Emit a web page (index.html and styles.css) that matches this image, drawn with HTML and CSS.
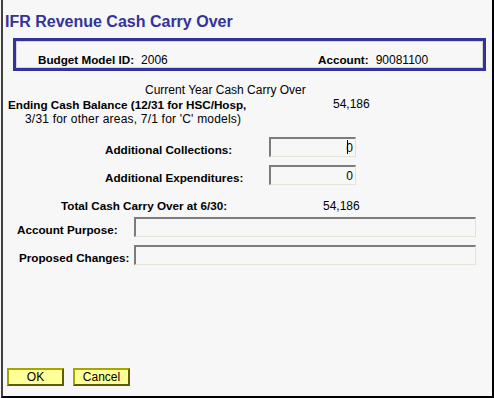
FILE: index.html
```html
<!DOCTYPE html>
<html lang="en">

<head>
    <meta charset="UTF-8">
    <title>IFR Revenue Cash Carry Over</title>
    <link rel="stylesheet" href="styles.css">
</head>

<body>
    <div class="window">
        <h1 class="title">IFR Revenue Cash Carry Over</h1>

        <!-- Model / account header -->
        <div class="model-box">
            <div class="pair pair-model"><span class="lbl">Budget Model ID:</span><span class="val">2006</span></div>
            <div class="pair"><span class="lbl">Account:</span><span class="val">90081100</span></div>
        </div>

        <div class="section-head">Current Year Cash Carry Over</div>

        <div class="row row-ending">
            <div class="lbl ending">Ending Cash Balance (12/31 for HSC/Hosp,<span class="sub">3/31 for other areas, 7/1 for 'C' models)</span></div>
            <div class="val">54,186</div>
        </div>

        <div class="row row-field row-collect">
            <label class="lbl adj" for="collections">Additional Collections:</label>
            <span class="caret-wrap"><input id="collections" class="amount" value="0"></span>
        </div>

        <div class="row row-field row-expend">
            <label class="lbl adj" for="expenditures">Additional Expenditures:</label>
            <input id="expenditures" class="amount" value="0">
        </div>

        <div class="row row-total">
            <div class="lbl total">Total Cash Carry Over at 6/30:</div>
            <div class="val">54,186</div>
        </div>

        <div class="row row-field row-purpose">
            <label class="lbl long" for="purpose">Account Purpose:</label>
            <input id="purpose" class="wide">
        </div>

        <div class="row row-field row-proposed">
            <label class="lbl long proposed" for="proposed">Proposed Changes:</label>
            <input id="proposed" class="wide">
        </div>

        <div class="actions">
            <button class="btn">OK</button>
            <button class="btn">Cancel</button>
        </div>
    </div>
</body>

</html>
```

FILE: styles.css
```css
body {
    margin: 0;
    background-color: #f7f7f7;
    color: #000;
    font-family: "Liberation Sans", Arial, sans-serif;
    font-size: 12px;
}

.window {
    margin-left: 1px;
    width: 493px;
    height: 398px;
    box-sizing: border-box;
    border-left: 2px solid #404040;
    border-right: 2px solid #000;
    border-bottom: 2px solid #000;
    display: flex;
    flex-direction: column;
}

.title {
    margin: 12px 0 0 2px;
    font-size: 16px;
    line-height: 20px;
    font-weight: bold;
    color: #333399;
}

.model-box {
    margin: 6px 0 0 10px;
    width: 473px;
    height: 33px;
    box-sizing: border-box;
    border: 3px solid #333399;
    box-shadow: inset 0 0 0 1px #d4d4d4;
    padding: 12px 0 0 22px;
    display: flex;
    line-height: 14px;
}

.lbl {
    font-weight: bold;
    font-size: 11.7px;
}

.pair-model {
    width: 280px;
}

.pair .val {
    margin-left: 7px;
}

.section-head {
    margin: 12px 0 0 142px;
    line-height: 14px;
}

.row {
    display: flex;
}

.row-ending {
    line-height: 15px;
}

.ending {
    width: 330px;
    box-sizing: border-box;
    padding-left: 5px;
}

.ending .sub {
    display: block;
    font-weight: normal;
    font-size: 12px;
    letter-spacing: 0.2px;
    padding-left: 17px;
}

.row-field {
    align-items: flex-end;
    line-height: 14px;
}

.row-collect {
    margin-top: 10px;
}

.row-expend {
    margin-top: 8px;
}

.adj {
    width: 266px;
    box-sizing: border-box;
    padding-left: 102px;
}

.row-total {
    margin-top: 14px;
    line-height: 14px;
}

.total {
    width: 320px;
    box-sizing: border-box;
    padding-left: 58px;
}

.row-purpose {
    margin-top: 4px;
}

.row-proposed {
    margin-top: 8px;
}

.long {
    width: 131px;
    box-sizing: border-box;
    padding-left: 14px;
}

.proposed {
    padding-left: 16px;
}

input {
    margin: 0;
    height: 20px;
    box-sizing: border-box;
    padding: 0 2px;
    background-color: #f7f7f7;
    border-style: solid;
    border-width: 2px 1px 1px 2px;
    border-color: #7c7c7c #e2e2d6 #e2e2d6 #7c7c7c;
    font-family: "Liberation Sans", Arial, sans-serif;
    font-size: 12px;
    color: #000;
    outline: none;
}

.amount {
    width: 87px;
    text-align: right;
}

.wide {
    width: 342px;
}

.caret-wrap {
    position: relative;
    display: block;
}

.caret-wrap::after {
    content: "";
    position: absolute;
    right: 8px;
    top: 3px;
    width: 1px;
    height: 14px;
    background-color: #000;
}

.actions {
    margin-top: auto;
    padding: 0 0 10px 4px;
    display: flex;
    gap: 9px;
}

.btn {
    width: 57px;
    height: 18px;
    box-sizing: border-box;
    padding: 0;
    background-color: #ffff99;
    border: 2px solid;
    border-color: #a6a600 #5e5e00 #5e5e00 #a6a600;
    font-family: "Liberation Sans", Arial, sans-serif;
    font-size: 12px;
    line-height: 14px;
    color: #000;
}
```
